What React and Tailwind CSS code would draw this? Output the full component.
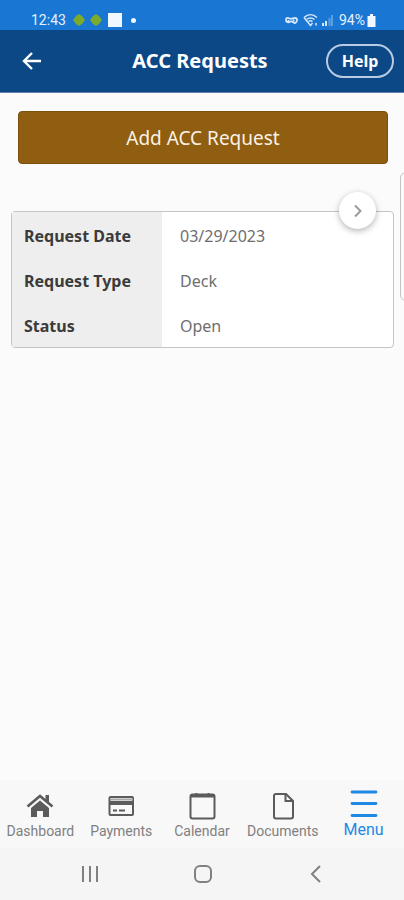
import React from "react";

const details = [
  ["Request Date", "03/29/2023"],
  ["Request Type", "Deck"],
  ["Status", "Open"],
];

function StatusBar() {
  return (
    <div className="flex h-[30px] items-end justify-between bg-[#1976d2] pr-[28px] pl-[31px] font-['Roboto',sans-serif] text-sm text-[#e6f1fc]">
      <div className="flex items-center gap-[5px]">
        <span>12:43</span>
        <svg className="h-[14px] w-[32px]" viewBox="0 0 32 14" fill="#7cab2c" aria-hidden="true">
          <path d="M8 1l3 2 3 4-3 4-3 2-3-2-3-4 3-4zM25 1l3 2 3 4-3 4-3 2-3-2-3-4 3-4z" />
        </svg>
        <span className="h-[14px] w-[14px] bg-[#f1f7fe]" />
        <span className="ml-1 h-[5px] w-[5px] rounded-full bg-[#f1f7fe]" />
      </div>
      <div className="flex items-center gap-[5px]">
        <svg className="h-[10px] w-[13px]" viewBox="0 0 13 10" fill="none" stroke="#d5e6f8" strokeWidth="1.8" aria-hidden="true">
          <path d="M1 4.5C1 2.500 3 2.500 4.500 3.500S8 3 10 3s2 1 2 2-1 3-2.500 3S7 5.500 5.500 6.500 1 8 1 4.500zM3.500 5v2M8.500 4.500v2" />
        </svg>
        <svg className="h-[14px] w-[31px]" viewBox="0 0 31 14" fill="none" stroke="#d5e6f8" strokeWidth="1.5" aria-hidden="true">
          <path d="M1 4.500C5 .8 10 .8 14 4.500M3.500 6.500C6 4.500 9 4.500 11.500 6.500M5.500 8.500c1.500-1 2.500-1 4 0" />
          <path d="M1 4.500l6.500 8L9.500 10M13 10v2.500" />
          <path d="M20 10v3M23 8v5" strokeWidth="2" />
          <path d="M26.500 5v8M29 2v11" stroke="#5c9fe0" strokeWidth="2" />
        </svg>
        <span className="flex items-center gap-[2px]">
          94%
          <svg className="h-[13px] w-[9px]" viewBox="0 0 9 13" fill="#f1f7fe" aria-hidden="true">
            <path d="M3 0h3v2h2.500v11H.5V2H3z" />
          </svg>
        </span>
      </div>
    </div>
  );
}

function Header() {
  return (
    <header className="grid h-[63px] grid-cols-[1fr_auto_1fr] items-center border-b border-[#647da6] bg-[#0c4886] px-[10px] text-white">
      <button type="button" aria-label="Back" className="justify-self-start pl-[10px]">
        <svg className="h-6 w-6" viewBox="0 0 24 24" fill="none" stroke="currentColor" strokeWidth="2.4" aria-hidden="true">
          <path d="M21 12H4M12 4l-8 8 8 8" />
        </svg>
      </button>
      <h1 className="pr-1 text-xl font-bold">ACC Requests</h1>
      <button type="button" className="h-[34px] w-[68px] justify-self-end rounded-full border-2 border-[#b9cae3] text-base font-bold">
        Help
      </button>
    </header>
  );
}

function RequestCard() {
  return (
    <article className="relative mt-[39px] w-[calc(100%-10px)] shrink-0 rounded border border-[#c4c4c4] bg-white">
      <table className="w-full table-fixed border-collapse text-left text-base">
        <tbody>
          {details.map(([label, value]) => (
            <tr key={label} className="h-[45px]">
              <th scope="row" className="w-[150px] bg-[#eeeeee] pt-[2px] pl-3 font-bold text-[#3b3b3b]">{label}</th>
              <td className="pt-[2px] pl-[18px] text-[#6e6e6e]">{value}</td>
            </tr>
          ))}
        </tbody>
      </table>
      <button
        type="button"
        aria-label="Next request"
        className="absolute -top-5 right-[17px] flex h-[37px] w-[37px] items-center justify-center rounded-full bg-white text-[#9a9a9a] shadow-[0_2px_6px_rgba(0,0,0,0.3)]"
      >
        <svg className="h-4 w-4" viewBox="0 0 16 16" fill="none" stroke="currentColor" strokeWidth="2" aria-hidden="true">
          <path d="M5 2.500L10.500 8 5 13.500" />
        </svg>
      </button>
    </article>
  );
}

const tabs = [
  {
    label: "Dashboard",
    icon: (
      <svg className="h-7 w-7" viewBox="0 0 28 28" aria-hidden="true">
        <path d="M1.500 14.500L14 4l12.500 10.500" fill="none" stroke="#5b5b5b" strokeWidth="2.600" />
        <path d="M19.500 3H23v9l-3.500-3zM14 8.500l9 7.500v9h-6v-6h-6v6H5v-9z" fill="#5b5b5b" />
      </svg>
    ),
  },
  {
    label: "Payments",
    icon: (
      <svg className="h-7 w-7" viewBox="0 0 28 28" fill="none" stroke="#5b5b5b" aria-hidden="true">
        <rect x="2.500" y="5" width="23.500" height="18" rx="1" strokeWidth="2" />
        <path d="M3 11h23" strokeWidth="4" />
        <path d="M3 7.500h23" stroke="#a8a8a8" strokeWidth="2" />
        <path d="M6 18.500h4M12 18.500h6" strokeWidth="2" />
      </svg>
    ),
  },
  {
    label: "Calendar",
    icon: (
      <svg className="h-7 w-7" viewBox="0 0 28 28" fill="none" stroke="#5b5b5b" aria-hidden="true">
        <rect x="2.500" y="2.500" width="24" height="24" rx="2" strokeWidth="2" />
        <path d="M3 4h23" strokeWidth="3" />
        <path d="M8.500 1v3M20.500 1v3" strokeWidth="2" />
      </svg>
    ),
  },
  {
    label: "Documents",
    icon: (
      <svg className="h-7 w-7" viewBox="0 0 28 28" fill="none" stroke="#5b5b5b" strokeWidth="2" aria-hidden="true">
        <path d="M17 2H7a2 2 0 0 0-2 2v20.500a2 2 0 0 0 2 2h15a2 2 0 0 0 2-2V9z" />
        <path d="M16.500 2v7H24" />
      </svg>
    ),
  },
];

function TabBar() {
  return (
    <nav className="grid h-[68px] grid-cols-5 bg-[#f8f8f8] font-['Roboto',sans-serif]">
      {tabs.map(({ label, icon }) => (
        <a key={label} href="#" className="flex flex-col items-center gap-[3px] pt-3 text-sm leading-4 text-[#808080]">
          {icon}
          {label}
        </a>
      ))}
      <a href="#" aria-current="page" className="flex flex-col items-center gap-[2px] pt-[10px] text-base leading-5 text-[#1e88e5]">
        <svg className="h-7 w-7" viewBox="0 0 28 28" fill="none" stroke="currentColor" strokeWidth="2.800" strokeLinecap="round" aria-hidden="true">
          <path d="M2 2h24M2 13.500h24M2 25.500h24" />
        </svg>
        Menu
      </a>
    </nav>
  );
}

function SystemNav() {
  return (
    <div className="flex h-[52px] items-center justify-between bg-[#f5f5f5] pr-[77px] pl-[79px] text-[#808080]">
      <button type="button" aria-label="Recent apps">
        <svg className="h-[22px] w-[22px]" viewBox="0 0 22 22" stroke="currentColor" strokeWidth="2" aria-hidden="true">
          <path d="M4 3v16M11 3v16M18 3v16" />
        </svg>
      </button>
      <button type="button" aria-label="Home">
        <svg className="h-[22px] w-[22px]" viewBox="0 0 22 22" fill="none" stroke="currentColor" strokeWidth="2" aria-hidden="true">
          <rect x="3" y="3" width="16" height="16" rx="5" />
        </svg>
      </button>
      <button type="button" aria-label="Back one screen">
        <svg className="h-[22px] w-[22px]" viewBox="0 0 22 22" fill="none" stroke="currentColor" strokeWidth="2" aria-hidden="true">
          <path d="M15 3l-8 8 8 8" />
        </svg>
      </button>
    </div>
  );
}

export default function App() {
  return (
    <div className="flex min-h-screen flex-col bg-[#fbfbfb] font-['Noto_Sans','Open_Sans',sans-serif]">
      <StatusBar />
      <Header />
      <main className="flex-1 pt-[18px]">
        <div className="pr-4 pl-[18px]">
          <button type="button" className="h-[53px] w-full rounded border border-[#7d4f0a] bg-[#8f5e11] pt-[2px] text-[19px] text-[#fbf1e4]">
            Add ACC Request
          </button>
        </div>
        <section aria-label="Requests" className="mt-2 flex items-start gap-[6px] overflow-hidden pb-4 pl-[11px]">
          <RequestCard />
          <div className="h-[129px] w-full shrink-0 rounded-md border border-[#c4c4c4]" />
        </section>
      </main>
      <TabBar />
      <SystemNav />
    </div>
  );
}
